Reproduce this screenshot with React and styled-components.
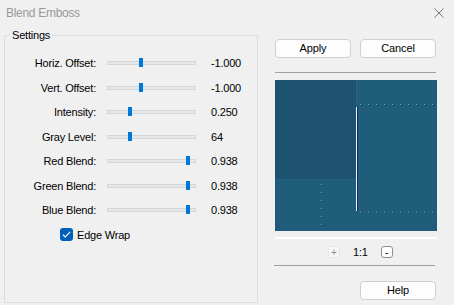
import React from "react";
import styled, { createGlobalStyle } from "styled-components";

const sliders = [
  { label: "Horiz. Offset:", value: "-1.000", pos: 32 },
  { label: "Vert. Offset:", value: "-1.000", pos: 32 },
  { label: "Intensity:", value: "0.250", pos: 21 },
  { label: "Gray Level:", value: "64", pos: 21 },
  { label: "Red Blend:", value: "0.938", pos: 79 },
  { label: "Green Blend:", value: "0.938", pos: 79 },
  { label: "Blue Blend:", value: "0.938", pos: 79 },
];

function Dot({ x, y }) {
  return (
    <>
      <rect x={x} y={y} width="1" height="1" fill="#53b8dc" />
      <rect x={x + 1} y={y + 1} width="1" height="1" fill="#0c2c40" />
    </>
  );
}

function Preview() {
  const row = Array.from({ length: 10 }, (_, i) => 85 + i * 8);
  const col = Array.from({ length: 6 }, (_, i) => 104 + i * 8);
  return (
    <PreviewBox>
      <svg width="162" height="151" viewBox="0 0 162 151">
        <rect width="162" height="151" fill="#205d7b" />
        <rect width="81" height="99" fill="#1d5370" />
        <rect x="81" y="0" width="1" height="27" fill="#286682" />
        <rect x="0" y="99" width="81" height="1" fill="#25607d" />
        <rect x="81" y="27" width="1" height="104" fill="#f4f6f8" />
        <rect x="82" y="27" width="1" height="104" fill="#0b2a66" />
        {row.map((x) => (
          <Dot key={"t" + x} x={x} y={24} />
        ))}
        {row.map((x) => (
          <Dot key={"b" + x} x={x} y={132} />
        ))}
        {col.map((y) => (
          <Dot key={"c" + y} x={46} y={y} />
        ))}
      </svg>
    </PreviewBox>
  );
}

function App() {
  return (
    <>
      <GlobalStyle />
      <Window>
        <TitleBar>
          <Title>Blend Emboss</Title>
          <svg width="10" height="10" viewBox="0 0 10 10">
            <path d="M0.5 0.5 L9.5 9.5 M9.5 0.5 L0.5 9.5" stroke="#7a7a7a" strokeWidth="1" />
          </svg>
        </TitleBar>
        <Body>
          <Group>
            <Legend>Settings</Legend>
            {sliders.map((s) => (
              <Row key={s.label}>
                <Label>{s.label}</Label>
                <Track>
                  <Thumb pos={s.pos} />
                </Track>
                <Value>{s.value}</Value>
              </Row>
            ))}
            <CheckRow>
              <Check>
                <svg width="9" height="7" viewBox="0 0 9 7">
                  <path d="M0.8 3.6 L3.2 6 L8.2 0.8" stroke="#fff" strokeWidth="1.1" fill="none" />
                </svg>
              </Check>
              <span>Edge Wrap</span>
            </CheckRow>
          </Group>
          <Side>
            <Buttons>
              <Button>Apply</Button>
              <Button>Cancel</Button>
            </Buttons>
            <Rule />
            <Preview />
            <WhiteBar />
            <ZoomRow>
              <ZoomButton disabled>+</ZoomButton>
              <span>1:1</span>
              <ZoomButton>-</ZoomButton>
            </ZoomRow>
            <Rule style={{ marginTop: 7, marginLeft: -1 }} />
            <HelpRow>
              <Button>Help</Button>
            </HelpRow>
          </Side>
        </Body>
      </Window>
    </>
  );
}

const GlobalStyle = createGlobalStyle`
  body {
    margin: 0;
    background: #f0f0f0;
    font-family: "Liberation Sans", Arial, sans-serif;
    font-size: 11px;
    letter-spacing: -0.2px;
    color: #000;
  }
`;

const Window = styled.div`
  width: 454px;
  height: 305px;
  background: #f0f0f0;
  display: flex;
  flex-direction: column;
  overflow: hidden;
`;

const TitleBar = styled.div`
  height: 25px;
  display: flex;
  align-items: center;
  justify-content: space-between;
  padding: 0 10px 0 6px;
  svg {
    display: block;
  }
`;

const Title = styled.div`
  font-size: 12px;
  letter-spacing: -0.3px;
  color: #999999;
`;

const Body = styled.div`
  display: flex;
  padding-left: 4px;
  gap: 16px;
`;

const Group = styled.div`
  position: relative;
  margin-top: 10px;
  width: 252px;
  border: 1px solid #dcdcdc;
  padding-top: 15px;
  box-sizing: content-box;
  height: 251px;
`;

const Legend = styled.div`
  position: absolute;
  top: -7px;
  left: 5px;
  padding: 0 2px;
  line-height: 13px;
  background: #f0f0f0;
`;

const Row = styled.div`
  height: 24.5px;
  display: flex;
  align-items: center;
`;

const Label = styled.div`
  width: 91px;
  text-align: right;
  white-space: nowrap;
`;

const Track = styled.div`
  position: relative;
  margin-left: 11px;
  width: 89px;
  height: 4px;
  box-sizing: border-box;
  border: 1px solid #d6d6d6;
  background: #e6e8e8;
`;

const Thumb = styled.div`
  position: absolute;
  left: ${(p) => p.pos - 1}px;
  top: -4px;
  width: 4px;
  height: 9px;
  background: #0078d7;
`;

const Value = styled.div`
  margin-left: 15px;
`;

const CheckRow = styled.div`
  height: 24.5px;
  display: flex;
  align-items: center;
  padding-left: 55px;
  gap: 4px;
`;

const Check = styled.div`
  width: 13px;
  height: 13px;
  border-radius: 3px;
  background: #005fb8;
  display: flex;
  align-items: center;
  justify-content: center;
  svg {
    display: block;
  }
`;

const Side = styled.div`
  width: 162px;
  margin-left: 1px;
  padding-top: 14px;
  display: flex;
  flex-direction: column;
`;

const Buttons = styled.div`
  display: flex;
  gap: 9px;
`;

const Button = styled.button`
  width: 76px;
  height: 19px;
  padding: 0;
  border: 1px solid #cfcfcf;
  border-radius: 4px;
  background: #fdfdfd;
  font-family: "Liberation Sans", Arial, sans-serif;
  font-size: 11px;
  letter-spacing: -0.1px;
  color: #000;
  line-height: 17px;
`;

const Rule = styled.div`
  margin-top: 14px;
  height: 1px;
  width: 161px;
  background: #a0a0a0;
`;

const PreviewBox = styled.div`
  margin-top: 7px;
  height: 151px;
  svg {
    display: block;
  }
`;

const WhiteBar = styled.div`
  margin-top: 6px;
  height: 2px;
  background: #ffffff;
`;

const ZoomRow = styled.div`
  margin-top: 7px;
  height: 12px;
  display: flex;
  align-items: center;
  gap: 13px;
  padding-left: 53px;
`;

const ZoomButton = styled.button`
  width: 12px;
  height: 12px;
  padding: 0;
  border: 1px solid ${(p) => (p.disabled ? "#e6e6e6" : "#8f8f8f")};
  border-radius: 3px;
  background: ${(p) => (p.disabled ? "#f7f7f7" : "#ffffff")};
  color: ${(p) => (p.disabled ? "#8a8a8a" : "#000")};
  font-family: "Liberation Sans", Arial, sans-serif;
  font-size: 10px;
  line-height: 9px;
`;

const HelpRow = styled.div`
  margin-top: 15px;
  display: flex;
  justify-content: flex-end;
  padding-right: 1px;
`;

export default App;
